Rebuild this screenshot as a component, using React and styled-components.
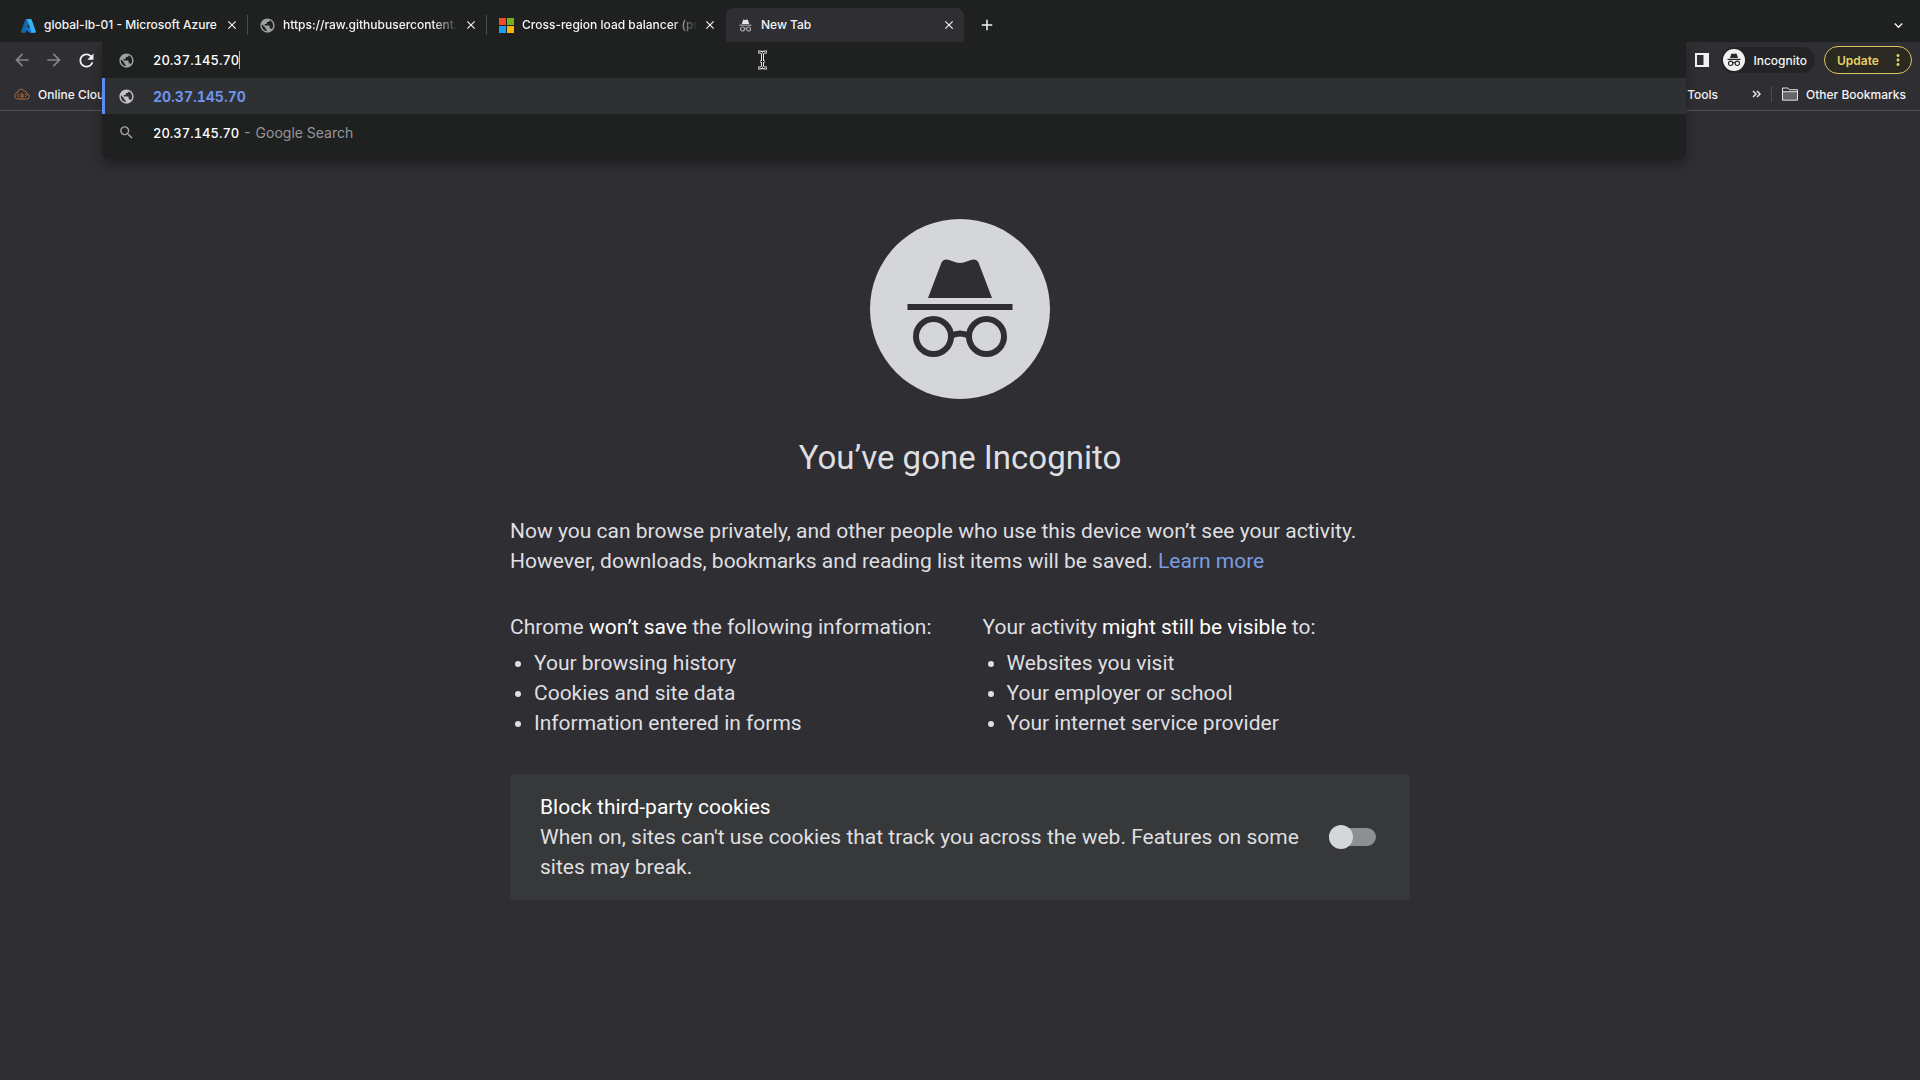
import React, { useState } from "react";
import styled, { createGlobalStyle } from "styled-components";
import {
  MdAdd,
  MdArrowBack,
  MdArrowForward,
  MdClose,
  MdExpandMore,
  MdMoreVert,
  MdPublic,
  MdRefresh,
  MdSearch,
} from "react-icons/md";

const Global = createGlobalStyle`
  * { box-sizing: border-box; }
  html, body { margin: 0; background: #2f2e33; }
  button, input { font: inherit; color: inherit; }
  button { border: 0; background: none; padding: 0; margin: 0; cursor: pointer; }
  svg { display: block; flex: none; }
`;

const Window = styled.div`
  min-height: 100vh;
  background: #2f2e33;
  color: #f4f4f5;
  font-family: Inter, "Liberation Sans", sans-serif;
  font-size: 12px;
  font-weight: 500;
`;

const TabStrip = styled.nav`
  display: flex;
  align-items: center;
  height: 42px;
  padding: 8px 12px 0 9px;
  background: #1f2020;
`;

const Tab = styled.div`
  display: flex;
  align-items: center;
  gap: 4px;
  flex: 0 1 238px;
  min-width: 0;
  height: 34px;
  padding: 0 7px 0 12px;
  border-radius: 8px 8px 0 0;
  background: ${(p) => (p.$active ? "#2f2e33" : "transparent")};
`;

const Divider = styled.span`
  flex: none;
  width: 1px;
  height: ${(p) => p.$height}px;
  background: ${(p) => (p.$hidden ? "transparent" : "#4b4c50")};
`;

const TabIcon = styled.span`
  display: flex;
  justify-content: center;
  flex: none;
  width: 15px;
  margin-right: 4px;
`;

const TabTitle = styled.span`
  flex: 1;
  min-width: 0;
  overflow: hidden;
  white-space: nowrap;
  line-height: 20px;
  mask-image: ${(p) => (p.$fade ? "linear-gradient(90deg, #000 85%, transparent)" : "none")};
`;

const IconButton = styled.button`
  display: inline-flex;
  align-items: center;
  justify-content: center;
  flex: none;
  width: ${(p) => p.$size}px;
  height: ${(p) => p.$size}px;
  margin-left: ${(p) => p.$gap || 0}px;
  color: ${(p) => p.$color || "#f4f4f5"};
`;

const Spacer = styled.span`
  flex: 1;
`;

const Header = styled.header`
  position: relative;
  border-bottom: 1px solid #525256;
`;

const Toolbar = styled.div`
  display: flex;
  align-items: center;
  gap: 9px;
  height: 36px;
  padding: 0 8px 0 12px;
`;

const NavButtons = styled.div`
  display: flex;
  gap: 12px;
`;

const BookmarkBar = styled.div`
  display: flex;
  align-items: center;
  height: 32px;
  padding: 0 14px;
`;

const Bookmark = styled.a`
  display: flex;
  align-items: center;
  gap: 8px;
  color: #f4f4f5;
  text-decoration: none;
  white-space: nowrap;
`;

const BookmarkEnd = styled.div`
  display: flex;
  align-items: center;
  gap: 10px;
`;

const Overflow = styled.button`
  margin-left: 33px;
  width: 10px;
  display: flex;
  justify-content: center;
`;

const Profile = styled.button`
  display: flex;
  align-items: center;
  gap: 8px;
  height: 26px;
  padding: 0 8px 0 2px;
  border-radius: 13px;
  background: #242427;
`;

const Update = styled.button`
  display: flex;
  align-items: center;
  justify-content: space-between;
  width: 88px;
  height: 28px;
  padding: 0 4px 0 12px;
  border: 1px solid #d9c45f;
  border-radius: 14px;
  background: #2b2a22;
  color: #e8cf63;
  font-weight: 600;
`;

const Omnibox = styled.div`
  position: absolute;
  top: 0;
  left: 102px;
  right: 234px;
  height: 117px;
  background: #1f2020;
  border-radius: 0 0 6px 6px;
  box-shadow: 0 6px 12px rgba(0, 0, 0, 0.3);
  font-size: 13px;
  font-variant-numeric: tabular-nums;
`;

const AddressRow = styled.label`
  display: flex;
  align-items: center;
  height: 36px;
  padding-left: 16px;
  cursor: text;
`;

const Address = styled.input`
  field-sizing: content;
  margin-left: 18px;
  padding: 0;
  border: 0;
  outline: 0;
  background: transparent;
  color: #fff;
  font-variant-numeric: tabular-nums;
`;

const Caret = styled.span`
  width: 1px;
  height: 18px;
  background: #b9babd;
`;

const Suggestion = styled.button`
  display: flex;
  align-items: center;
  gap: 18px;
  width: 100%;
  height: 36px;
  padding-left: ${(p) => (p.$selected ? 13 : 16)}px;
  border-left: ${(p) => (p.$selected ? "3px solid #5d8cf0" : "0")};
  background: ${(p) => (p.$selected ? "#2f3032" : "transparent")};
  color: ${(p) => (p.$selected ? "#6d93ea" : "#fff")};
  font-size: ${(p) => (p.$selected ? 14 : 13)}px;
  font-weight: ${(p) => (p.$selected ? 700 : 500)};
  font-variant-numeric: tabular-nums;
  text-align: left;
`;

const Muted = styled.span`
  color: #96979a;
  font-size: 14px;
  font-weight: 400;
`;

const Pointer = styled.svg`
  position: absolute;
  left: calc(50% - 137px);
  top: 8px;
`;

const Page = styled.main`
  max-width: 900px;
  margin: 0 auto;
  padding-top: 108px;
  font-family: Roboto, "Liberation Sans", sans-serif;
  font-size: 21px;
  font-weight: 400;
  line-height: 30px;
  color: #dfdfe1;
`;

const Hero = styled.div`
  display: flex;
  justify-content: center;
`;

const Title = styled.h1`
  margin: 35px 0 0;
  text-align: center;
  font-size: 33px;
  line-height: 48px;
  font-weight: 400;
`;

const Intro = styled.p`
  margin: 34px 0 0;
`;

const Link = styled.a`
  color: #7b9ce0;
  text-decoration: none;
`;

const Columns = styled.div`
  display: flex;
  gap: 51px;
  margin-top: 36px;
`;

const ListTitle = styled.h2`
  margin: 0;
  font: inherit;
`;

const Em = styled.em`
  font-style: normal;
  color: #fff;
`;

const List = styled.ul`
  margin: 6px 0 0;
  padding-left: 24px;
`;

const Card = styled.label`
  display: flex;
  align-items: center;
  justify-content: space-between;
  gap: 24px;
  margin-top: 36px;
  padding: 18px 34px 18px 30px;
  border-radius: 4px;
  background: #363839;
`;

const CardText = styled.span`
  max-width: 770px;
`;

const CardTitle = styled.span`
  display: block;
  color: #fff;
`;

const Toggle = styled.input`
  appearance: none;
  flex: none;
  display: flex;
  align-items: center;
  position: relative;
  width: 47px;
  height: 24px;
  margin: 0;
  cursor: pointer;
  &::before {
    content: "";
    flex: 1;
    height: 18px;
    border-radius: 9px;
    background: #8b9092;
  }
  &::after {
    content: "";
    position: absolute;
    left: ${(p) => (p.checked ? 23 : 0)}px;
    width: 24px;
    height: 24px;
    border-radius: 50%;
    background: #d5d6d8;
  }
`;

const Spy = ({ size, disc, ink }) => (
  <svg width={size} height={size} viewBox="0 0 180 180" aria-hidden="true">
    <circle cx="90" cy="90" r="90" fill={disc} />
    <g fill={ink}>
      <path d="M58 79L71.500 43.500C73 40.500 76 39.800 79 41L85 43Q90 45 95 43L101 41C104 39.800 107 40.500 108.500 43.500L122 79Z" />
      <path d="M37.500 85H142.500V91H37.500Z" />
    </g>
    <g fill="none" stroke={ink} strokeWidth="6">
      <circle cx="63.500" cy="117.500" r="17.500" />
      <circle cx="116.500" cy="117.500" r="17.500" />
      <path d="M81 117Q90 112 99 117" />
    </g>
  </svg>
);

const SpySmall = () => (
  <svg width="13" height="13" viewBox="0 0 13 13" aria-hidden="true">
    <path fill="#e6e6e8" d="M2.800 5L4 1.200Q4.300 .4 5.200 .7L6.500 1L7.800 .7Q8.700 .4 9 1.200L10.200 5Z" />
    <path fill="#a9a9ac" d="M.5 5.600H12.500V6.800H.5Z" />
    <g fill="none" stroke="#a9a9ac" strokeWidth="1.200">
      <circle cx="3.500" cy="10" r="2" />
      <circle cx="9.500" cy="10" r="2" />
      <path d="M5.500 9.500Q6.500 8.900 7.500 9.500" />
    </g>
  </svg>
);

const Avatar = () => (
  <svg width="22" height="22" viewBox="0 0 22 22" aria-hidden="true">
    <circle cx="11" cy="11" r="11" fill="#f1f1f2" />
    <g fill="#28282b">
      <path d="M7 9L8.300 5Q8.600 4.200 9.500 4.500L11 4.900L12.500 4.500Q13.400 4.200 13.700 5L15 9Z" />
      <path d="M4.500 9.800H17.500V11H4.500Z" />
    </g>
    <g fill="none" stroke="#28282b" strokeWidth="1.100">
      <circle cx="7.700" cy="14.300" r="2.200" />
      <circle cx="14.300" cy="14.300" r="2.200" />
      <path d="M9.900 14Q11 13.300 12.100 14" />
    </g>
  </svg>
);

const AzureLogo = () => (
  <svg width="15" height="15" viewBox="0 0 96 96" aria-hidden="true">
    <path fill="#1566a8" d="M33 7H61L32 92C31 94 29 95 27 95H6C1 95-1 91 0 87L27 11Q29 7 33 7Z" />
    <path fill="#0b78d1" d="M71 62H27Q24 64 26 67L54 93L57 95H82Z" />
    <path fill="#35b3f0" d="M69 11Q67 7 63 7H33Q37 7 39 11L66 87Q68 93 61 95H90Q97 93 95 87Z" />
  </svg>
);

const MicrosoftLogo = () => (
  <svg width="15" height="15" viewBox="0 0 15 15" aria-hidden="true">
    <path fill="#f04b25" d="M0 0H7V7H0Z" />
    <path fill="#72b51a" d="M8 0H15V7H8Z" />
    <path fill="#16a0ee" d="M0 8H7V15H0Z" />
    <path fill="#fbb408" d="M8 8H15V15H8Z" />
  </svg>
);

const CloudLogo = () => (
  <svg width="16" height="12" viewBox="0 0 16 12" fill="none" stroke="#b56a34" aria-hidden="true">
    <path d="M3.500 11H12.800Q15.300 10.800 15.300 8.500Q15.200 6.200 13 6Q12.600 3.300 10.300 3Q8.900 .8 6.500 1.200Q4 1.700 3.800 4.400Q.9 4.800 .7 7.600Q.8 10.800 3.500 11Z" />
    <path d="M5 6L3.500 7.500L5 9M11 6L12.500 7.500L11 9M7 6H9V9H7Z" />
  </svg>
);

const SidePanelIcon = () => (
  <svg width="14" height="14" viewBox="0 0 14 14" aria-hidden="true">
    <path fill="#f1f1f2" fillRule="evenodd" d="M0 0H14V14H0ZM2 2V12H8.500V2Z" />
  </svg>
);

const FolderIcon = () => (
  <svg width="16" height="14" viewBox="0 0 16 14" aria-hidden="true">
    <path fill="#66666a" d="M1 4.500H15V13H1Z" />
    <path fill="none" stroke="#e4e4e6" d="M.5 13.200V1H5.800L7.300 2.700H15.500V13.200ZM.5 4.700H15.500" />
  </svg>
);

const ChevronsIcon = () => (
  <svg width="9" height="8" viewBox="0 0 9 8" fill="none" stroke="#e4e4e6" strokeWidth="1.500" aria-hidden="true">
    <path d="M1 1L4 4L1 7M5 1L8 4L5 7" />
  </svg>
);

const tabs = [
  { title: "global-lb-01 - Microsoft Azure", icon: <AzureLogo /> },
  {
    title: "https://raw.githubusercontent.",
    icon: <MdPublic size={17} color="#9fa1a4" />,
    fade: true,
  },
  { title: "Cross-region load balancer (pr", icon: <MicrosoftLogo />, fade: true },
  { title: "New Tab", icon: <SpySmall />, active: true },
];

const lists = [
  {
    title: (
      <>
        Chrome <Em>won’t save</Em> the following information:
      </>
    ),
    items: ["Your browsing history", "Cookies and site data", "Information entered in forms"],
  },
  {
    title: (
      <>
        Your activity <Em>might still be visible</Em> to:
      </>
    ),
    items: ["Websites you visit", "Your employer or school", "Your internet service provider"],
  },
];

export default function App() {
  const [address, setAddress] = useState("20.37.145.70");
  const [blocked, setBlocked] = useState(false);

  return (
    <Window>
      <Global />
      <TabStrip>
        {tabs.map((tab, i) => (
          <React.Fragment key={tab.title}>
            <Tab $active={tab.active}>
              <TabIcon>{tab.icon}</TabIcon>
              <TabTitle $fade={tab.fade}>{tab.title}</TabTitle>
              <IconButton $size={16} aria-label="Close tab">
                <MdClose size={14} />
              </IconButton>
            </Tab>
            <Divider $height={20} $hidden={tab.active || tabs[i + 1]?.active} />
          </React.Fragment>
        ))}
        <IconButton $size={20} $gap={12} aria-label="New tab">
          <MdAdd size={18} />
        </IconButton>
        <Spacer />
        <IconButton $size={20} aria-label="Search tabs">
          <MdExpandMore size={17} />
        </IconButton>
      </TabStrip>

      <Header>
        <Toolbar>
          <NavButtons>
            <IconButton $size={20} $color="#85868a" aria-label="Back">
              <MdArrowBack size={20} />
            </IconButton>
            <IconButton $size={20} $color="#85868a" aria-label="Forward">
              <MdArrowForward size={20} />
            </IconButton>
            <IconButton $size={20} aria-label="Reload">
              <MdRefresh size={21} />
            </IconButton>
          </NavButtons>
          <Spacer />
          <IconButton $size={20} aria-label="Side panel">
            <SidePanelIcon />
          </IconButton>
          <Profile>
            <Avatar />
            Incognito
          </Profile>
          <Update>
            Update
            <MdMoreVert size={18} />
          </Update>
        </Toolbar>

        <BookmarkBar>
          <Bookmark href="#cloud">
            <CloudLogo />
            Online Clou
          </Bookmark>
          <Spacer />
          <Bookmark href="#tools">Tools</Bookmark>
          <BookmarkEnd>
            <Overflow aria-label="More bookmarks">
              <ChevronsIcon />
            </Overflow>
            <Divider $height={16} />
            <Bookmark href="#other">
              <FolderIcon />
              Other Bookmarks
            </Bookmark>
          </BookmarkEnd>
        </BookmarkBar>

        <Omnibox>
          <AddressRow>
            <MdPublic size={17} color="#9fa1a4" />
            <Address
              aria-label="Address and search bar"
              value={address}
              onChange={(e) => setAddress(e.target.value)}
            />
            <Caret />
          </AddressRow>
          <Suggestion $selected>
            <MdPublic size={17} color="#c3c4c6" />
            20.37.145.70
          </Suggestion>
          <Suggestion>
            <MdSearch size={17} color="#a4a5a8" />
            <span>
              20.37.145.70 <Muted>- Google Search</Muted>
            </span>
          </Suggestion>
          <Pointer width="11" height="20" viewBox="0 0 11 20" fill="none" aria-hidden="true">
            <path stroke="#e6e6e8" strokeWidth="3" d="M1 2H3Q5.500 2 5.500 4.500V15.500Q5.500 18 3 18H1M10 2H8Q5.500 2 5.500 4.500M5.500 15.500Q5.500 18 8 18H10M3.500 11.500H7.500" />
            <path stroke="#111" d="M1.500 2H3Q5.500 2 5.500 4.500V15.500Q5.500 18 3 18H1.500M9.500 2H8Q5.500 2 5.500 4.500M5.500 15.500Q5.500 18 8 18H9.500M4 11.500H7" />
          </Pointer>
        </Omnibox>
      </Header>

      <Page>
        <Hero>
          <Spy size={180} disc="#d5d6d9" ink="#2f2e33" />
        </Hero>
        <Title>You’ve gone Incognito</Title>
        <Intro>
          Now you can browse privately, and other people who use this device won’t see your activity.
          However, downloads, bookmarks and reading list items will be saved.{" "}
          <Link href="#learn-more">Learn more</Link>
        </Intro>
        <Columns>
          {lists.map((list, i) => (
            <section key={i}>
              <ListTitle>{list.title}</ListTitle>
              <List>
                {list.items.map((item) => (
                  <li key={item}>{item}</li>
                ))}
              </List>
            </section>
          ))}
        </Columns>
        <Card>
          <CardText>
            <CardTitle>Block third-party cookies</CardTitle>
            When on, sites can't use cookies that track you across the web. Features on some sites
            may break.
          </CardText>
          <Toggle
            type="checkbox"
            role="switch"
            checked={blocked}
            onChange={(e) => setBlocked(e.target.checked)}
          />
        </Card>
      </Page>
    </Window>
  );
}
